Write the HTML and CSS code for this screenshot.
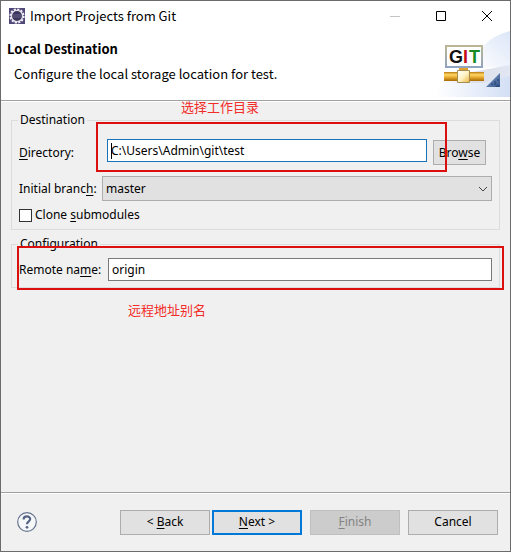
FILE: index.html
```html
<!DOCTYPE html>
<html lang="en">
<head>
<meta charset="utf-8">
<title>Import Projects from Git</title>
<link rel="stylesheet" href="styles.css">
</head>
<body>
<main class="window">
  <header class="titlebar">
    <svg class="app-icon" viewBox="0 0 16 16" aria-hidden="true">
      <rect width="16" height="16" fill="#51487a"/>
      <circle cx="8" cy="8" r="6.6" fill="none" stroke="#f4f2f6" stroke-width="2" stroke-dasharray="2.1 1.36"/>
      <circle cx="8" cy="8" r="5.6" fill="#3a365b" stroke="#e4e1ea" stroke-width="1.4"/>
      <path d="M3.5 7h9M3.5 9h9" stroke="#67638b" stroke-width="1"/>
    </svg>
    <span class="title">Import Projects from Git</span>
    <button class="caption" aria-label="Minimize" disabled><svg viewBox="0 0 12 12"><path d="M1 6.5h10" stroke="#c4c4c4"/></svg></button>
    <button class="caption" aria-label="Maximize"><svg viewBox="0 0 12 12"><path d="M1.5 1.5h9v9h-9z" fill="none" stroke="#000"/></svg></button>
    <button class="caption" aria-label="Close"><svg viewBox="0 0 12 12"><path d="M1 1l10 10M11 1L1 11" stroke="#000"/></svg></button>
  </header>
  <section class="banner">
    <div class="banner-text">
      <h1>Local Destination</h1>
      <p>Configure the local storage location for test.</p>
    </div>
    <svg class="banner-art" viewBox="0 0 75 66" aria-hidden="true">
      <defs>
        <linearGradient id="glow" x1="0" y1="1" x2="1" y2="0"><stop offset="0" stop-color="#fff"/><stop offset="1" stop-color="#dce6f8"/></linearGradient>
        <linearGradient id="base" x1="0" y1="0" x2="1" y2="0"><stop offset="0" stop-color="#fff"/><stop offset="1" stop-color="#d3dff5"/></linearGradient>
        <linearGradient id="shade" x1="0" y1="0" x2="1" y2="0"><stop offset="0" stop-color="#fff"/><stop offset=".5" stop-color="#dcdfe8"/><stop offset="1" stop-color="#e1e7f3"/></linearGradient>
        <linearGradient id="pipe" x1="0" y1="0" x2="0" y2="1"><stop offset="0" stop-color="#b97d10"/><stop offset=".3" stop-color="#ffd764"/><stop offset=".6" stop-color="#e7aa30"/><stop offset="1" stop-color="#a66a05"/></linearGradient>
        <linearGradient id="node" x1="0" y1="0" x2="1" y2="1"><stop offset="0" stop-color="#fff"/><stop offset=".5" stop-color="#fff3c5"/><stop offset="1" stop-color="#e8b43b"/></linearGradient>
        <linearGradient id="frame" x1="0" y1="0" x2="0" y2="1"><stop offset="0" stop-color="#bab692"/><stop offset="1" stop-color="#91a4c0"/></linearGradient>
        <linearGradient id="fold" x1="0" y1="0" x2="1" y2="1"><stop offset="0" stop-color="#8ca8d3"/><stop offset="1" stop-color="#315086"/></linearGradient>
      </defs>
      <path d="M75 0C55 5 43 17 36 36H75z" fill="url(#glow)"/>
      <path d="M0 66C4 52 12 46 75 36V66z" fill="url(#base)"/>
      <path d="M10 46L75 34V45L48 52H5z" fill="url(#shade)"/>
      <path d="M24 36h9v5h-9z" fill="#dda32d"/>
      <path d="M9 41h40v9H9z" fill="url(#pipe)"/>
      <path d="M22.500 39.500h12v12h-12z" fill="url(#node)" stroke="#a58b52"/>
      <path d="M11 15h36v21h-36z" fill="#fff" stroke="url(#frame)" stroke-width="2"/>
      <text class="logo-text" x="14" y="32" fill="#111">G</text>
      <text class="logo-text" x="28" y="32" fill="#c40d18">I</text>
      <text class="logo-text" x="34" y="32" fill="#168b25">T</text>
      <path d="M65 42V56H51z" fill="url(#fold)"/>
      <path d="M56 53h2M60 50v4M63 48v2M61 55h3" stroke="#1f3e70"/>
    </svg>
  </section>
  <form class="page">
    <p class="note note-directory" lang="zh-CN">选择工作目录</p>
    <fieldset class="group">
      <legend>Destination</legend>
      <div class="row row-directory">
        <label for="directory"><u>D</u>irectory:</label>
        <input id="directory" class="field field-focus" type="text" value="C:\Users\Admin\git\test">
        <button class="button browse" type="button">Bro<u>w</u>se</button>
        <span class="mark mark-directory"></span>
        <span class="caret"></span>
      </div>
      <div class="row row-branch">
        <label for="branch">Initial branc<u>h</u>:</label>
        <span class="combo">
          <select id="branch"><option>master</option></select>
          <svg viewBox="0 0 10 6" aria-hidden="true"><path d="M1 1l4 4 4-4" fill="none" stroke="#444"/></svg>
        </span>
      </div>
      <div class="row row-clone">
        <input id="clone" type="checkbox">
        <label for="clone">Clone <u>s</u>ubmodules</label>
      </div>
    </fieldset>
    <fieldset class="group group-config">
      <legend>Configuration</legend>
      <div class="row row-remote">
        <label for="remote">Remote na<u>m</u>e:</label>
        <input id="remote" class="field" type="text" value="origin">
      </div>
      <span class="mark mark-config"></span>
    </fieldset>
    <p class="note note-remote" lang="zh-CN">远程地址别名</p>
  </form>
  <footer class="actions">
    <button class="help" aria-label="Help">
      <svg viewBox="0 0 20 20"><circle cx="10" cy="10" r="9.300" fill="#f6f7f9" stroke="#66738f" stroke-width="1.200"/><path d="M6.600 7.500C6.600 3.400 13.200 3.400 13.200 7.100C13.200 9.500 10 9.300 10 12.300" fill="none" stroke="#566585" stroke-width="2.200"/><circle cx="10" cy="15.300" r="1.400" fill="#566585"/></svg>
    </button>
    <button class="button wide">&lt; <u>B</u>ack</button>
    <button class="button wide primary"><u>N</u>ext &gt;</button>
    <button class="button wide spaced" disabled><u>F</u>inish</button>
    <button class="button wide spaced">Cancel</button>
  </footer>
</main>
</body>
</html>
```

FILE: styles.css
```css
* {
  box-sizing: border-box;
}

body {
  margin: 0;
  color: #000;
  font: 12px/18px "Noto Sans", "Noto Sans CJK SC", sans-serif;
}

button,
input,
select {
  margin: 0;
  color: inherit;
  font: inherit;
}

h1,
p {
  margin: 0;
}

u {
  text-underline-offset: 2px;
}

.window {
  display: flex;
  flex-direction: column;
  min-height: 100vh;
  border: 1px solid #6b6b6b;
  background: #f0f0f0;
}

.titlebar {
  display: flex;
  align-items: center;
  height: 29px;
  padding-left: 8px;
  background: #fff;
}

.app-icon {
  width: 16px;
  height: 16px;
  margin-right: 5px;
}

.title {
  flex: 1;
}

.title,
.banner-text {
  font-family: "Noto Sans CJK SC", "Noto Sans", sans-serif;
  font-size: 13px;
}

.caption {
  display: flex;
  align-items: center;
  justify-content: center;
  width: 46px;
  height: 28px;
  padding: 0;
  border: 0;
  background: none;
}

.caption svg {
  width: 12px;
  height: 12px;
}

.banner {
  display: flex;
  align-items: flex-end;
  height: 71px;
  border-bottom: 1px solid #a0a0a0;
  background: #fff;
}

.banner-text {
  flex: 1;
  align-self: flex-start;
  padding: 10px 0 0 6px;
}

.banner-text h1 {
  font-size: 13px;
  line-height: 18px;
}

.banner-text p {
  padding: 7px 0 0 7px;
}

.banner-art {
  width: 75px;
  height: 66px;
  margin-bottom: 3px;
}

.logo-text {
  font: bold 18px "Liberation Sans Narrow", "Liberation Sans", sans-serif;
}

.page {
  position: relative;
  flex: 1;
  padding: 9px 10px 0;
  border-top: 1px solid #fff;
}

.group {
  position: relative;
  min-width: 0;
  margin: 0;
  padding: 10px 7px 5px;
  border: 1px solid #dcdcdc;
}

.group legend {
  margin-left: -1px;
  padding: 0 2px;
}

.group-config {
  margin-top: 5px;
  padding: 5px 7px 6px;
}

.row {
  position: relative;
  display: flex;
  align-items: center;
}

.row label {
  white-space: nowrap;
}

.row-directory {
  align-items: flex-start;
  padding-right: 6px;
}

.row-directory label {
  width: 88px;
  padding-top: 5px;
}

.row-branch {
  margin-top: 11px;
}

.row-branch label {
  width: 83px;
}

.row-clone {
  gap: 3px;
  margin-top: 5px;
}

.row-remote label {
  width: 89px;
}

.field {
  flex: 1;
  min-width: 0;
  height: 23px;
  padding: 0 3px;
  border: 1px solid #7a7a7a;
  border-radius: 0;
  background: #fff;
  outline: 0;
}

.field-focus {
  border-color: #1a73b8;
}

.caret {
  position: absolute;
  top: 4px;
  left: 92px;
  width: 1px;
  height: 16px;
  background: #000;
}

.combo {
  position: relative;
  flex: 1;
  display: flex;
}

.combo select {
  flex: 1;
  height: 25px;
  padding: 0 3px;
  border: 1px solid #adadad;
  border-radius: 0;
  background: #e1e1e1;
  appearance: none;
}

.combo svg {
  position: absolute;
  top: 10px;
  right: 4px;
  width: 10px;
  height: 6px;
  pointer-events: none;
}

.row-clone input {
  width: 13px;
  height: 13px;
  border: 1px solid #333;
  background: #fff;
  appearance: none;
}

.button {
  height: 25px;
  padding: 0;
  border: 1px solid #adadad;
  border-radius: 0;
  background: #e1e1e1;
}

.browse {
  width: 53px;
  margin: 1px 0 0 6px;
}

.mark {
  position: absolute;
  border: 2px solid #dc0f0f;
  pointer-events: none;
}

.mark-directory {
  top: -17px;
  right: 45px;
  bottom: -7px;
  left: 77px;
}

.mark-config {
  top: -7px;
  right: -5px;
  bottom: -3px;
  left: 5px;
}

.note {
  position: absolute;
  color: #f22c28;
  font-size: 13px;
}

.note-directory {
  top: -4px;
  left: 180px;
}

.note-remote {
  position: static;
  padding: 13px 0 0 117px;
}

.actions {
  display: flex;
  align-items: center;
  height: 59px;
  padding: 0 12px 0 16px;
  border-top: 1px solid #a0a0a0;
  box-shadow: inset 0 1px #fff;
}

.help {
  width: 20px;
  height: 20px;
  margin-right: auto;
  padding: 0;
  border: 0;
  background: none;
}

.help svg {
  display: block;
  width: 20px;
  height: 20px;
}

.wide {
  width: 90px;
}

.primary {
  margin-left: 2px;
  border: 2px solid #0078d7;
}

.spaced {
  margin-left: 8px;
}

.button:disabled {
  border-color: #bfbfbf;
  background: #ccc;
  color: #838383;
}
```
